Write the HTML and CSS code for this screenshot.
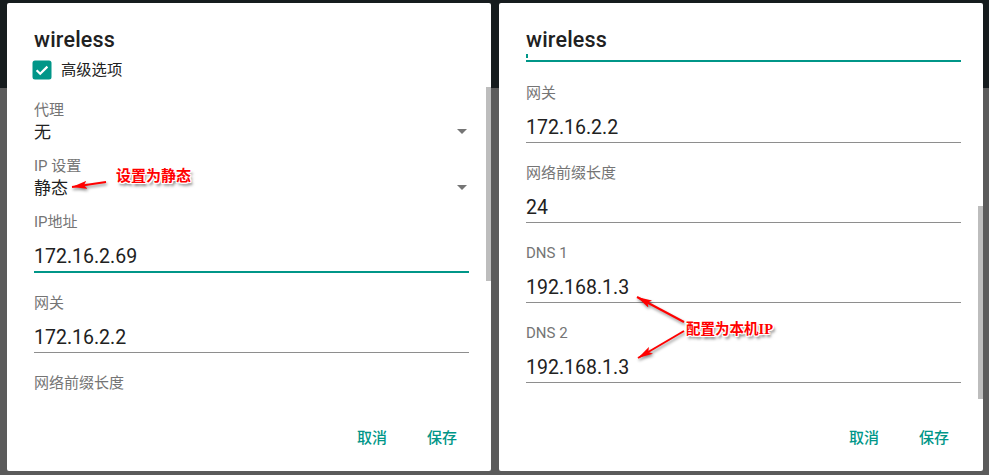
FILE: index.html
```html
<!DOCTYPE html>
<html lang="zh-CN">
<head>
<meta charset="utf-8">
<title>wireless</title>
<link rel="stylesheet" href="styles.css">
</head>
<body>
<div class="screen">
  <section class="dialog">
    <h1 class="dialog-title">wireless</h1>
    <label class="check-row">
      <span class="checkbox">
        <svg width="20" height="20" viewBox="0 0 20 20"><rect x="0.5" y="0.5" width="19" height="19" rx="2.5" fill="#009688"/><path d="M4.6 10.2 L8.2 13.8 L15.4 6.6" fill="none" stroke="#fff" stroke-width="2.2"/></svg>
      </span>
      <span>高级选项</span>
    </label>
    <div class="scroll">
      <div class="spinner first">
        <div class="label">代理</div>
        <div class="spin-value"><span>无</span><i class="caret"></i></div>
      </div>
      <div class="spinner">
        <div class="label">IP 设置</div>
        <div class="spin-value"><span>静态</span><i class="caret"></i></div>
      </div>
      <div class="field focused tight">
        <div class="label">IP地址</div>
        <div class="value">172.16.2.69</div>
      </div>
      <div class="field">
        <div class="label">网关</div>
        <div class="value">172.16.2.2</div>
      </div>
      <div class="field">
        <div class="label">网络前缀长度</div>
      </div>
    </div>
    <div class="actions">
      <button class="btn">取消</button>
      <button class="btn">保存</button>
    </div>
    <div class="thumb thumb-left"></div>
  </section>

  <section class="dialog">
    <h1 class="dialog-title">wireless</h1>
    <div class="scroll scroll-right">
      <div class="field-tail"><span class="cursor"></span></div>
      <div class="field">
        <div class="label">网关</div>
        <div class="value">172.16.2.2</div>
      </div>
      <div class="field">
        <div class="label">网络前缀长度</div>
        <div class="value">24</div>
      </div>
      <div class="field">
        <div class="label">DNS 1</div>
        <div class="value">192.168.1.3</div>
      </div>
      <div class="field">
        <div class="label">DNS 2</div>
        <div class="value">192.168.1.3</div>
      </div>
    </div>
    <div class="actions">
      <button class="btn">取消</button>
      <button class="btn">保存</button>
    </div>
    <div class="thumb thumb-right"></div>
  </section>
</div>

<div class="annotations">
  <svg class="arrows" width="989" height="475" viewBox="0 0 989 475">
    <defs>
      <marker id="ah" markerWidth="15" markerHeight="8" refX="15" refY="4" orient="auto" markerUnits="userSpaceOnUse">
        <path d="M0,0 L15,4 L0,8 L3,4 z" fill="#f00"/>
      </marker>
    </defs>
    <line x1="106" y1="182" x2="72" y2="187" stroke="#f00" stroke-width="2" marker-end="url(#ah)"/>
    <line x1="684" y1="322" x2="637" y2="297" stroke="#f00" stroke-width="2" marker-end="url(#ah)"/>
    <line x1="684" y1="331" x2="638" y2="358" stroke="#f00" stroke-width="2" marker-end="url(#ah)"/>
  </svg>
  <span class="note note-left">设置为静态</span>
  <span class="note note-right">配置为本机IP</span>
</div>
</body>
</html>
```

FILE: styles.css
```css
* { box-sizing: border-box; }

html, body {
  margin: 0;
  padding: 0;
}

body {
  width: 989px;
  height: 475px;
  overflow: hidden;
  position: relative;
  background: linear-gradient(to bottom, #161c1e 0, #161c1e 88px, #5b5b5b 88px, #5b5b5b 100%);
  font-family: Roboto, "Noto Sans CJK SC", sans-serif;
  color: #212121;
}

.screen {
  display: flex;
  gap: 8px;
  padding: 3px 0 0 7px;
}

.dialog {
  position: relative;
  width: 484px;
  height: 468px;
  background: #fff;
  border-radius: 2px;
  display: flex;
  flex-direction: column;
  overflow: hidden;
}

.dialog-title {
  margin: 0;
  padding: 25px 22px 0 27px;
  font-size: 21.5px;
  line-height: 24px;
  font-weight: 500;
  letter-spacing: 0.2px;
  color: #212121;
}

.check-row {
  display: flex;
  align-items: center;
  gap: 9px;
  height: 20px;
  margin: 8px 0 0 25px;
  font-size: 15.3px;
  line-height: 20px;
  color: #212121;
}

.checkbox {
  width: 20px;
  height: 20px;
  display: block;
}

.checkbox svg { display: block; }

.scroll {
  flex: 1;
  overflow: hidden;
  padding: 19.5px 22px 0 27px;
}

.scroll-right {
  padding-top: 2px;
}

.label {
  font-size: 15px;
  line-height: 20px;
  color: #757575;
  white-space: nowrap;
}

.spinner {
  margin-bottom: 12px;
}

.spin-value {
  display: flex;
  align-items: center;
  justify-content: space-between;
  height: 24px;
  font-size: 17px;
  line-height: 24px;
  color: #212121;
}

.caret {
  width: 0;
  height: 0;
  margin-right: 2px;
  border-left: 5px solid transparent;
  border-right: 5px solid transparent;
  border-top: 5px solid #757575;
}

.spinner + .field {
  margin-top: 2px;
}

.field {
  margin-bottom: 20px;
}

.value {
  margin-top: 11px;
  height: 29px;
  font-size: 19.5px;
  line-height: 28px;
  color: #212121;
  border-bottom: 1px solid #8e8e8e;
}

.field.focused .value {
  height: 30px;
  border-bottom: 2px solid #009688;
}

.field-tail {
  position: relative;
  height: 8px;
  border-bottom: 2px solid #009688;
  margin-bottom: 20.5px;
}

.cursor {
  position: absolute;
  left: 0;
  top: 0;
  width: 2px;
  height: 4px;
  background: #009688;
}

.actions {
  display: flex;
  justify-content: flex-end;
  gap: 8px;
  padding: 16px 18px 15.5px 0;
}

.btn {
  border: 0;
  background: none;
  margin: 0;
  height: 36px;
  padding: 0 16px;
  font-family: Roboto, "Noto Sans CJK SC", sans-serif;
  font-size: 15px;
  line-height: 36px;
  font-weight: 500;
  color: #009688;
}

.thumb {
  position: absolute;
  right: 0;
  width: 5px;
  background: #bdbdbd;
}

.thumb-left {
  top: 84px;
  height: 194px;
}

.thumb-right {
  top: 203px;
  height: 193px;
}

.annotations {
  position: absolute;
  left: 0;
  top: 0;
  width: 989px;
  height: 475px;
  pointer-events: none;
}

.arrows {
  position: absolute;
  left: 0;
  top: 0;
  filter: drop-shadow(1px 2px 1.5px rgba(0, 0, 0, 0.45));
}

.note {
  position: absolute;
  font-family: "Liberation Serif", "Noto Sans CJK SC", serif;
  font-weight: 700;
  color: #f00;
  line-height: 20px;
  white-space: nowrap;
  text-shadow:
    1px 0 0 #fff, -1px 0 0 #fff, 0 1px 0 #fff, 0 -1px 0 #fff,
    1px 1px 0 #fff, -1px -1px 0 #fff, 1px -1px 0 #fff, -1px 1px 0 #fff,
    2px 3px 3px rgba(0, 0, 0, 0.55);
}

.note-left {
  left: 116px;
  top: 166px;
  font-size: 15px;
}

.note-right {
  left: 686px;
  top: 319px;
  font-size: 14.5px;
}
```
